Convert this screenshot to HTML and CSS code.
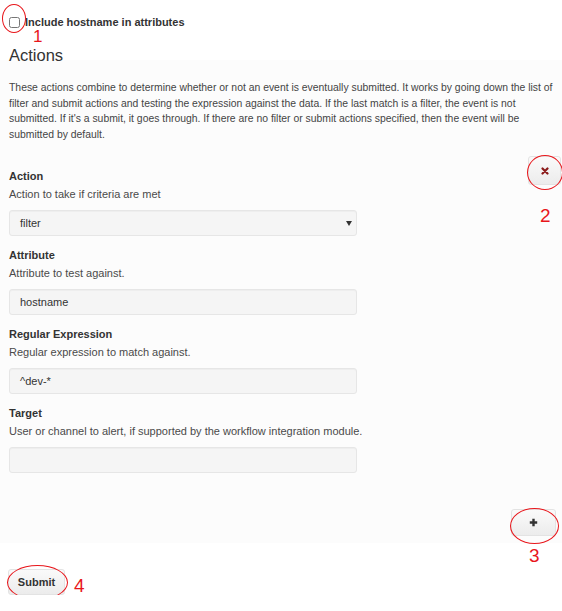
FILE: index.html
```html
<!DOCTYPE html>
<html>
<head>
<meta charset="utf-8">
<link rel="stylesheet" href="styles.css">
</head>
<body>
<div class="top">
  <label class="check">
    <span class="cb-wrap"><input type="checkbox" class="cb"><span class="ring ring-cb"></span><span class="num num-1">1</span></span>
    <span class="check-text">Include hostname in attributes</span>
  </label>
  <h2 class="title">Actions</h2>
</div>
<div class="panel">
  <p class="intro">These actions combine to determine whether or not an event is eventually submitted. It works by going down the list of filter and submit actions and testing the expression against the data. If the last match is a filter, the event is not submitted. If it's a submit, it goes through. If there are no filter or submit actions specified, then the event will be submitted by default.</p>
  <div class="action-row">
    <div class="fields">
      <div class="label">Action</div>
      <div class="help">Action to take if criteria are met</div>
      <div class="control select"><span>filter</span><span class="caret"></span></div>
      <div class="label">Attribute</div>
      <div class="help">Attribute to test against.</div>
      <div class="control">hostname</div>
      <div class="label">Regular Expression</div>
      <div class="help">Regular expression to match against.</div>
      <div class="control">^dev-*</div>
      <div class="label">Target</div>
      <div class="help">User or channel to alert, if supported by the workflow integration module.</div>
      <div class="control"></div>
    </div>
    <div class="remove-col">
      <div class="btn btn-remove">
        <svg width="8" height="8" viewBox="0 0 8 8"><path d="M1.5 1.5 L6.5 6.5 M6.5 1.5 L1.5 6.5" stroke="#8b1a1a" stroke-width="2.2" stroke-linecap="round"/></svg>
        <span class="ring ring-x"></span>
        <span class="num num-2">2</span>
      </div>
    </div>
  </div>
  <div class="add-row">
    <div class="btn btn-add">
      <svg width="9" height="9" viewBox="0 0 9 9"><path d="M4.5 0.8 V8.2 M0.8 4.5 H8.2" stroke="#333" stroke-width="2.4"/></svg>
      <span class="ring ring-add"></span>
      <span class="num num-3">3</span>
    </div>
  </div>
</div>
<div class="bottom">
  <div class="btn btn-submit">Submit<span class="ring ring-submit"></span><span class="num num-4">4</span></div>
</div>
</body>
</html>
```

FILE: styles.css
```css
html, body {
  margin: 0;
  padding: 0;
  background: #fff;
  font-family: "Liberation Sans", Arial, sans-serif;
  color: #333;
}
.top {
  padding: 14px 9px 0 9px;
  height: 46px;
}
.check {
  display: flex;
  align-items: center;
  gap: 4px;
  height: 12px;
}
.cb-wrap {
  position: relative;
  width: 12px;
  height: 12px;
  display: inline-block;
}
.cb {
  margin: 0;
  width: 11px;
  height: 11px;
}
.check-text {
  font-size: 11px;
  font-weight: bold;
  color: #333;
  position: relative;
  top: 2px;
  line-height: 12px;
}
.title {
  margin: 19.5px 0 0 0;
  font-size: 16.5px;
  font-weight: normal;
  color: #333;
  line-height: 18px;
}
.panel {
  background: #fcfcfc;
  padding: 20px 0 6px 9px;
}
.intro {
  margin: 0;
  font-size: 10.4px;
  line-height: 15.6px;
  color: #444;
  padding-right: 0;
}
.action-row {
  display: flex;
  margin-top: 14px;
}
.fields {
  width: 348px;
  padding-top: 12px;
}
.label {
  font-size: 11px;
  font-weight: bold;
  line-height: 16px;
  color: #333;
  margin-bottom: 2px;
}
.help {
  font-size: 11px;
  line-height: 16px;
  color: #4a4a4a;
  margin-bottom: 8px;
  white-space: nowrap;
}
.control {
  box-sizing: border-box;
  height: 26px;
  border: 1px solid #e6e6e6;
  border-radius: 3px;
  background: #f5f5f5;
  font-size: 11px;
  line-height: 24px;
  padding: 0 10px;
  color: #333;
  margin-bottom: 11px;
  box-shadow: inset 0 1px 1px rgba(0,0,0,0.03);
}
.select {
  display: flex;
  justify-content: space-between;
  align-items: center;
}
.caret {
  width: 0;
  height: 0;
  border-left: 3px solid transparent;
  border-right: 3px solid transparent;
  border-top: 5px solid #333;
  margin-right: -6px;
}
.remove-col {
  flex: 1;
  display: flex;
  justify-content: flex-end;
}
.btn {
  position: relative;
  box-sizing: border-box;
  display: flex;
  align-items: center;
  justify-content: center;
  background: linear-gradient(#fafafa, #ececec);
  border: 1px solid #e3e3e3;
  border-radius: 3px;
}
.btn-remove {
  width: 33px;
  height: 29px;
  margin-right: 1px;
}
.add-row {
  display: flex;
  justify-content: flex-end;
  padding: 0 6px 0 0;
  margin-top: 25px;
  height: 28px;
}
.btn-add {
  width: 45px;
  height: 27px;
}
.bottom {
  padding: 26px 9px 0 8px;
}
.btn-submit {
  width: 57px;
  height: 26px;
  font-size: 11px;
  font-weight: bold;
  color: #333;
}
.ring {
  position: absolute;
  border: 1px solid #e8161b;
  border-radius: 50%;
  pointer-events: none;
}
.ring-cb { left: -7px; top: -10px; width: 22px; height: 27px; }
.ring-x { left: -2px; top: -2px; width: 34px; height: 33px; }
.ring-add { left: -2px; top: -2px; width: 47px; height: 34px; }
.ring-submit { left: -2px; top: -5px; width: 59px; height: 33px; }
.num {
  position: absolute;
  color: #e8161b;
  font-family: "Liberation Sans", Arial, sans-serif;
  font-weight: normal;
  line-height: 1;
}
.num-1 { left: 24px; top: 16px; font-size: 17px; line-height: 14px; }
.num-2 { left: 11px; top: 49px; font-size: 19px; }
.num-3 { left: 17px; top: 36px; font-size: 19px; }
.num-4 { left: 65px; top: 6px; font-size: 19px; }
```
